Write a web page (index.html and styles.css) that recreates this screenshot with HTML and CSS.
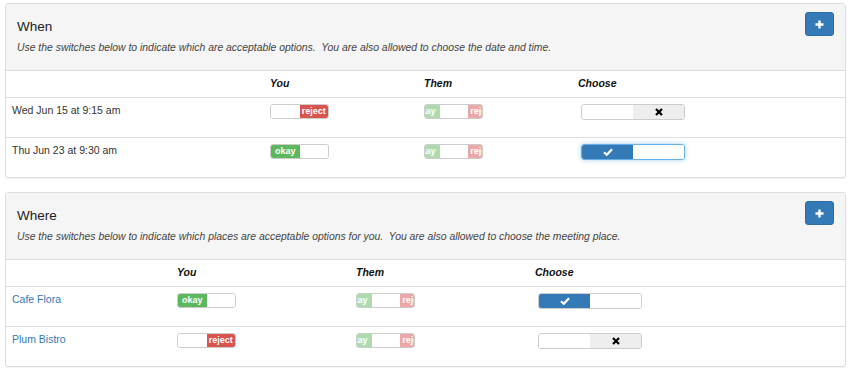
FILE: index.html
```html
<!DOCTYPE html>
<html>
<head>
<meta charset="utf-8">
<link rel="stylesheet" href="styles.css">
</head>
<body>
<div class="panel">
  <div class="panel-heading">
    <div class="heading-text">
      <h4 class="title">When</h4>
      <p class="desc">Use the switches below to indicate which are acceptable options.&nbsp; You are also allowed to choose the date and time.</p>
    </div>
    <button class="btn-add" type="button"><svg width="9" height="9" viewBox="0 0 9 9"><path d="M4.5 0.5V8.5M0.5 4.5H8.5" stroke="#fff" stroke-width="2.4"/></svg></button>
  </div>
  <div class="grid when">
    <div class="row head">
      <div class="cell"></div>
      <div class="cell th">You</div>
      <div class="cell th">Them</div>
      <div class="cell th">Choose</div>
    </div>
    <div class="row">
      <div class="cell">Wed Jun 15 at 9:15 am</div>
      <div class="cell"><div class="switch"><div class="track off"><span class="lbl ok">okay</span><span class="lbl mid"></span><span class="lbl no">reject</span></div></div></div>
      <div class="cell"><div class="switch faded"><div class="track ind"><span class="lbl ok">okay</span><span class="lbl mid"></span><span class="lbl no">reject</span></div></div></div>
      <div class="cell"><div class="choose"><span class="half blank"></span><span class="half grey"><svg width="8" height="8" viewBox="0 0 8 8"><path d="M1 1L7 7M7 1L1 7" stroke="#000" stroke-width="2.2"/></svg></span></div></div>
    </div>
    <div class="row">
      <div class="cell">Thu Jun 23 at 9:30 am</div>
      <div class="cell"><div class="switch"><div class="track on"><span class="lbl ok">okay</span><span class="lbl mid"></span><span class="lbl no">reject</span></div></div></div>
      <div class="cell"><div class="switch faded"><div class="track ind"><span class="lbl ok">okay</span><span class="lbl mid"></span><span class="lbl no">reject</span></div></div></div>
      <div class="cell"><div class="choose focus"><span class="half blue"><svg width="10" height="8" viewBox="0 0 10 8"><path d="M1 4.2L3.8 6.8L9 1.3" stroke="#fff" stroke-width="2.2" fill="none"/></svg></span><span class="half blank"></span></div></div>
    </div>
  </div>
</div>

<div class="panel">
  <div class="panel-heading">
    <div class="heading-text">
      <h4 class="title">Where</h4>
      <p class="desc">Use the switches below to indicate which places are acceptable options for you.&nbsp; You are also allowed to choose the meeting place.</p>
    </div>
    <button class="btn-add" type="button"><svg width="9" height="9" viewBox="0 0 9 9"><path d="M4.5 0.5V8.5M0.5 4.5H8.5" stroke="#fff" stroke-width="2.4"/></svg></button>
  </div>
  <div class="grid where">
    <div class="row head">
      <div class="cell"></div>
      <div class="cell th">You</div>
      <div class="cell th">Them</div>
      <div class="cell th">Choose</div>
    </div>
    <div class="row">
      <div class="cell"><a class="place" href="#">Cafe Flora</a></div>
      <div class="cell"><div class="switch"><div class="track on"><span class="lbl ok">okay</span><span class="lbl mid"></span><span class="lbl no">reject</span></div></div></div>
      <div class="cell"><div class="switch faded"><div class="track ind"><span class="lbl ok">okay</span><span class="lbl mid"></span><span class="lbl no">reject</span></div></div></div>
      <div class="cell"><div class="choose"><span class="half blue"><svg width="10" height="8" viewBox="0 0 10 8"><path d="M1 4.2L3.8 6.8L9 1.3" stroke="#fff" stroke-width="2.2" fill="none"/></svg></span><span class="half blank"></span></div></div>
    </div>
    <div class="row">
      <div class="cell"><a class="place" href="#">Plum Bistro</a></div>
      <div class="cell"><div class="switch"><div class="track off"><span class="lbl ok">okay</span><span class="lbl mid"></span><span class="lbl no">reject</span></div></div></div>
      <div class="cell"><div class="switch faded"><div class="track ind"><span class="lbl ok">okay</span><span class="lbl mid"></span><span class="lbl no">reject</span></div></div></div>
      <div class="cell"><div class="choose"><span class="half blank"></span><span class="half grey"><svg width="8" height="8" viewBox="0 0 8 8"><path d="M1 1L7 7M7 1L1 7" stroke="#000" stroke-width="2.2"/></svg></span></div></div>
    </div>
  </div>
</div>
</body>
</html>
```
FILE: styles.css
```css
* { box-sizing: border-box; }
html, body { background: #fff; }
body {
  margin: 0;
  padding: 3px 4px 0 5px;
  font-family: "Liberation Sans", Arial, sans-serif;
  font-size: 10.5px;
  line-height: 15px;
  color: #333;
}
.panel {
  border: 1px solid #ddd;
  border-radius: 3px;
  margin-bottom: 14px;
  box-shadow: 0 1px 1px rgba(0,0,0,.05);
  overflow: hidden;
}
.panel-heading {
  background: #f5f5f5;
  border-bottom: 1px solid #ddd;
  padding: 7px 11px 8px 11px;
  display: flex;
  justify-content: space-between;
  align-items: flex-start;
}
.title {
  margin: 8px 0 6px;
  font-size: 13.5px;
  line-height: 15px;
  font-weight: 500;
  color: #222;
}
.desc {
  margin: 0 0 7px;
  font-size: 10.4px;
  font-style: italic;
  color: #444;
}
.btn-add {
  margin-top: 1px;
  width: 29px;
  height: 24px;
  padding: 0;
  background: #337ab7;
  border: 1px solid #2e6da4;
  border-radius: 3px;
  display: flex;
  align-items: center;
  justify-content: center;
}
.grid .row {
  display: grid;
  height: 40px;
  border-top: 1px solid #ddd;
}
.grid .row.head {
  height: 26px;
  border-top: none;
}
.when .row { grid-template-columns: 258px 154px 154px 1fr; }
.where .row { grid-template-columns: 165px 179px 179px 1fr; }
.cell {
  padding: 5px 6px;
}
.th {
  font-weight: bold;
  font-style: italic;
  color: #111;
}
.place {
  color: #337ab7;
  text-decoration: none;
}
.switch {
  margin-top: 1px;
  width: 59px;
  height: 15px;
  border: 1px solid #ccc;
  border-radius: 3px;
  overflow: hidden;
  background: #fff;
}
.track {
  display: flex;
  width: 85.5px;
  height: 13px;
}
.track.on { margin-left: 0; }
.track.off { margin-left: -28.5px; }
.track.ind { margin-left: -14px; }
.lbl {
  flex: 0 0 28.5px;
  height: 13px;
  font-size: 9px;
  line-height: 13px;
  font-weight: bold;
  color: #fff;
  text-align: center;
  overflow: hidden;
  white-space: nowrap;
}
.lbl.ok { background: #5cb85c; }
.lbl.no { background: #d9534f; }
.lbl.mid { background: #fff; }
.switch.faded .lbl.ok, .switch.faded .lbl.no { opacity: .5; }
.choose {
  margin-top: 1px;
  margin-left: 3px;
  width: 104px;
  height: 16px;
  border: 1px solid #ccc;
  border-radius: 3px;
  overflow: hidden;
  display: flex;
}
.choose.focus {
  border-color: #66afe9;
  box-shadow: 0 0 5px rgba(102,175,233,.6);
}
.half {
  flex: 1 1 0;
  display: flex;
  align-items: center;
  justify-content: center;
}
.half.blank { background: #fff; }
.half.grey { background: #eee; }
.half.blue { background: #337ab7; }
```
